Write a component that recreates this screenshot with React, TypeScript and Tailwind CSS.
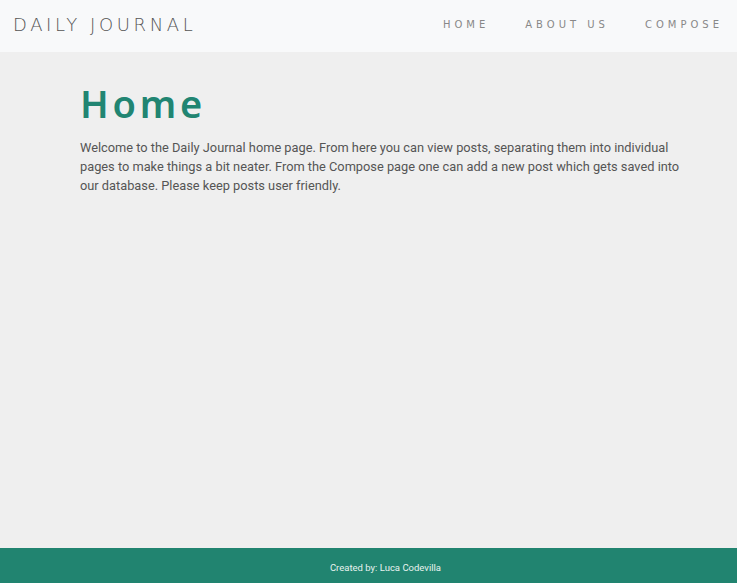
const links = ["Home", "About Us", "Compose"];

const App = () => {
  return (
    <div className="min-h-[583px] flex flex-col bg-[#efefef] font-['Roboto',sans-serif]">
      <nav className="h-[52px] bg-[#f8f9fa] flex flex-row items-center justify-between pl-[13px] pr-[14px] pb-[4px]">
        <a className="text-[18px] tracking-[0.2em] text-[#555] font-['DejaVu_Sans',sans-serif] font-light">
          DAILY JOURNAL
        </a>
        <ul className="flex flex-row items-center gap-[36px]">
          {links.map((item) => (
            <li
              key={item}
              className="text-[10px] uppercase tracking-[0.4em] text-[#888] font-['DejaVu_Sans',sans-serif]"
            >
              {item}
            </li>
          ))}
        </ul>
      </nav>

      <main className="flex-1 pl-[80px] pr-[45px] pt-[28px]">
        <h1 className="text-[38px] leading-[46px] font-semibold tracking-[0.1em] text-[#218572] font-['Noto_Sans',sans-serif]">
          Home
        </h1>
        <p className="mt-[12px] text-[12.8px] leading-[19.2px] text-[#555]">
          Welcome to the Daily Journal home page. From here you can view posts,
          separating them into individual pages to make things a bit neater.
          From the Compose page one can add a new post which gets saved into our
          database. Please keep posts user friendly.
        </p>
      </main>

      <footer className="h-[35px] bg-[#218470] flex items-center justify-center pl-[34px] pt-[6px]">
        <p className="text-[9.5px] text-[#e8f3ef]">Created by: Luca Codevilla</p>
      </footer>
    </div>
  );
};

export default App;
